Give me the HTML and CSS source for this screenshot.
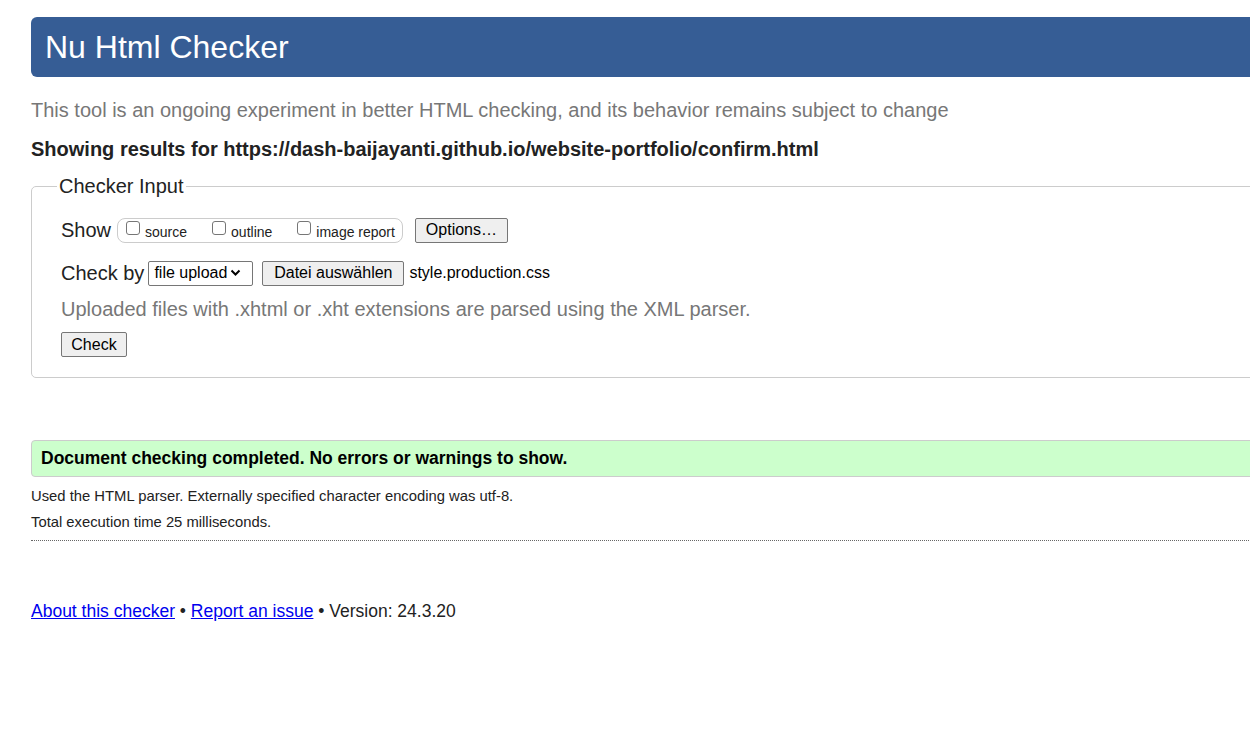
FILE: index.html
```html
<!DOCTYPE html>
<html lang="en">
<head>
<meta charset="utf-8">
<title>Nu Html Checker</title>
<link rel="stylesheet" href="styles.css">
</head>
<body>
<div class="page">
  <h1 class="banner">Nu Html Checker</h1>
  <p class="intro">This tool is an ongoing experiment in better HTML checking, and its behavior remains subject to change</p>
  <p class="showing">Showing results for https://dash-baijayanti.github.io/website-portfolio/confirm.html</p>
  <fieldset class="input-box">
    <legend class="legend">Checker Input</legend>
    <div class="row">
      <span class="label">Show</span>
      <span class="group">
        <label class="opt"><span class="cb"></span>source</label>
        <label class="opt"><span class="cb"></span>outline</label>
        <label class="opt"><span class="cb"></span>image report</label>
      </span>
      <span class="btn btn-options">Options…</span>
    </div>
    <div class="row row-check">
      <span class="label label-check">Check by</span>
      <span class="select">file upload <svg class="chev" width="11" height="8" viewBox="0 0 11 8"><path d="M1.5 1.5 L5.5 5.5 L9.5 1.5" fill="none" stroke="#000" stroke-width="2"/></svg></span>
      <span class="btn btn-file">Datei auswählen</span>
      <span class="filename">style.production.css</span>
    </div>
    <p class="note">Uploaded files with .xhtml or .xht extensions are parsed using the XML parser.</p>
    <span class="btn btn-check">Check</span>
  </fieldset>
  <div class="success">Document checking completed. No errors or warnings to show.</div>
  <p class="meta meta-first">Used the HTML parser. Externally specified character encoding was utf-8.</p>
  <p class="meta">Total execution time 25 milliseconds.</p>
  <hr class="dotted">
  <p class="footer"><a href="#">About this checker</a> • <a href="#">Report an issue</a> • Version: 24.3.20</p>
</div>
</body>
</html>
```
FILE: styles.css
```css
html { overflow: hidden; background: #fff; }
body {
  margin: 0;
  font-family: "Liberation Sans", Arial, sans-serif;
  color: #222;
}
.page {
  width: 1300px;
  padding: 17px 0 0 31px;
}
.banner {
  margin: 0;
  height: 60px;
  box-sizing: border-box;
  padding: 0 14px;
  background: #365d95;
  color: #fff;
  border-radius: 6px;
  font-size: 32px;
  font-weight: normal;
  line-height: 60px;
}
.intro {
  margin: 21px 0 0;
  font-size: 20px;
  line-height: 24px;
  color: #777;
}
.showing {
  margin: 15px 0 0;
  font-size: 20px;
  line-height: 24px;
  font-weight: bold;
  color: #222;
}
.input-box {
  margin: 14px 0 0;
  padding: 8px 29px 20px 29px;
  border: 1px solid #ccc;
  border-radius: 5px;
}
.legend {
  padding: 0 2px;
  margin-left: -4px;
  font-size: 20px;
  color: #222;
}
.row {
  display: flex;
  align-items: center;
  height: 26px;
  margin-top: 11px;
}
.row-check { margin-top: 17px; }
.label { font-size: 20px; margin-right: 6px; color: #222; }
.label-check { margin-right: 4px; }
.group {
  display: flex;
  align-items: center;
  height: 23px;
  border: 1px solid #ccc;
  border-radius: 8px;
  padding: 0 7px 0 8px;
  margin-right: 12px;
}
.opt {
  display: flex;
  align-items: center;
  font-size: 14px;
  color: #222;
  margin-right: 25px;
  padding-top: 4px;
}
.opt:last-child { margin-right: 0; }
.cb {
  width: 14px;
  height: 14px;
  border: 1px solid #767676;
  border-radius: 3px;
  margin-right: 5px;
  margin-top: -8px;
  box-sizing: border-box;
}
.btn {
  display: inline-flex;
  align-items: center;
  justify-content: center;
  box-sizing: border-box;
  border: 1px solid #767676;
  border-radius: 2px;
  background: #efefef;
  color: #000;
  font-size: 16px;
  height: 25px;
}
.btn-options { width: 93px; }
.select {
  display: inline-flex;
  align-items: center;
  box-sizing: border-box;
  height: 25px;
  width: 105px;
  border: 1px solid #767676;
  border-radius: 2px;
  padding: 0 0 0 5px;
  font-size: 16px;
  color: #000;
  margin-right: 9px;
}
.chev { margin-left: 3px; }
.btn-file { width: 142px; margin-right: 5px; }
.filename { font-size: 16px; color: #000; }
.note {
  margin: 11px 0 0;
  font-size: 20px;
  line-height: 24px;
  color: #777;
}
.btn-check { width: 66px; margin-top: 11px; }
.success {
  margin-top: 62px;
  height: 37px;
  box-sizing: border-box;
  background: #ccffcc;
  border: 1px solid #ccc;
  border-radius: 4px;
  padding: 0 9px;
  font-size: 17.5px;
  font-weight: bold;
  color: #000;
  line-height: 35px;
}
.meta {
  margin: 9px 0 0;
  font-size: 14.8px;
  line-height: 17px;
  color: #222;
}
.meta-first { margin-top: 11px; }
.dotted {
  margin: 9px 0 0;
  border: 0;
  border-top: 1px dotted #666;
  height: 0;
}
.footer {
  margin: 59px 0 0;
  font-size: 17.5px;
  line-height: 22px;
  color: #222;
}
.footer a { color: #0000ee; text-decoration: underline; }
```
